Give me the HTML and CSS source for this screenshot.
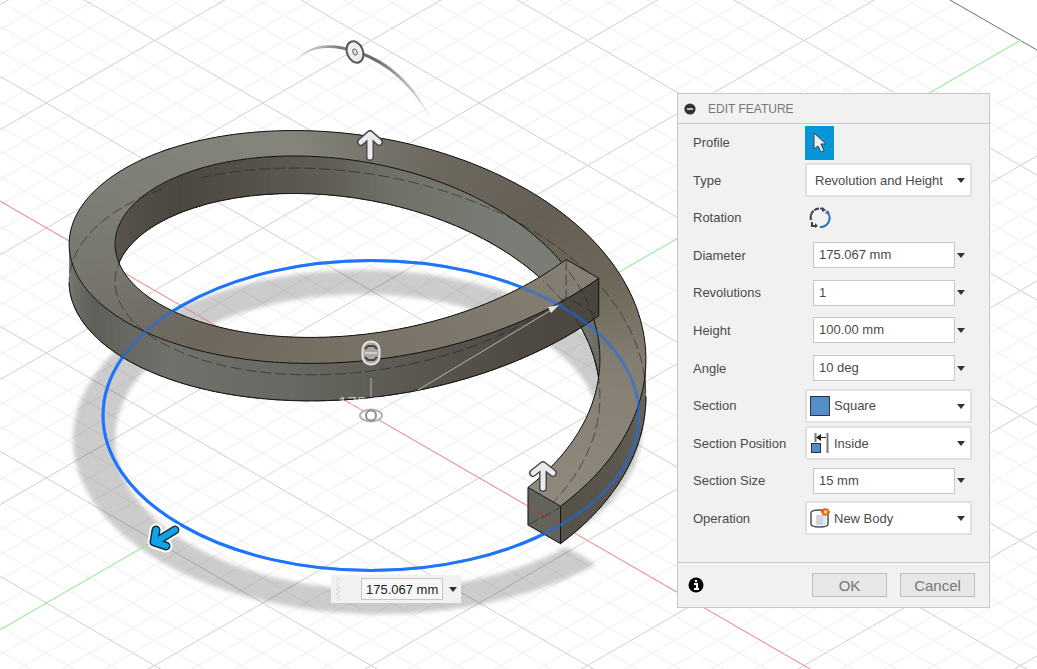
FILE: index.html
```html
<!DOCTYPE html>
<html lang="en">
  <head>
    <meta charset="UTF-8" />
    <meta name="viewport" content="width=device-width, initial-scale=1.0" />
    <title>Coil - Edit Feature</title>
    <link rel="stylesheet" href="styles.css">
  </head>
  <body>
    <main class="workspace">
      <svg class="viewport" viewBox="0 0 1037 669" preserveAspectRatio="xMinYMin slice" aria-label="Model view">
        <defs>
          <clipPath id="gridEdge">
            <path d="M0 0H951L1037 50V669H0Z" />
          </clipPath>
          <filter id="soft" x="-5%" y="-5%" width="110%" height="110%">
            <feGaussianBlur stdDeviation="2" />
          </filter>
          <linearGradient id="arcFade">
            <stop offset="0" stop-color="#777b80" stop-opacity="0" />
            <stop offset="0.35" stop-color="#777b80" />
            <stop offset="0.6" stop-color="#666a6e" />
            <stop offset="1" stop-color="#777b80" stop-opacity="0.1" />
          </linearGradient>
        </defs>

        <!-- ground grid, filled in by coil.js -->
        <g clip-path="url(#gridEdge)">
          <path id="gridMinor" class="grid-minor" />
          <path id="gridMajor" class="grid-major" />
        </g>
        <path class="grid-border" d="M950 0L1037 50" />

        <path id="shadow" class="shadow" filter="url(#soft)" />

        <path class="axis-y" d="M1021 40L619 272M147 545L0 630" />
        <path class="axis-y faint" d="M430 382L190 520" />
        <path class="axis-x" d="M0 201L810 669" />
        <ellipse class="profile" cx="371" cy="415.5" rx="268" ry="155" />

        <g id="coil"></g>

        <ellipse class="profile through" cx="371" cy="415.5" rx="268" ry="155" />
        <path class="axis-x through" d="M529 507L561 525" />

        <!-- diameter dimension -->
        <path class="leader" d="M418 390L553 309M371 378V397" />
        <path class="leader-tip" d="M559 305L548 307L551 313Z" />
        <text class="dimension" x="338" y="409">175.0</text>

        <!-- rotation handle -->
        <path fill="url(#arcFade)" d="M291 68C302 46 325 40 356 50C391 61 416 86 432 121C413 88 390 65 356 53C325 43 304 48 291 68Z" />
        <g transform="rotate(-22 355 52)">
          <ellipse cx="355" cy="52" rx="8" ry="11" fill="#eceded" stroke="#55585a" stroke-width="2" />
          <ellipse cx="355" cy="52" rx="2" ry="3" fill="none" stroke="#66696b" />
        </g>

        <!-- height arrows -->
        <g class="arrow">
          <path class="arrow-line" d="M370 157V137M361 142L370 134L379 142" />
          <path class="arrow-fill" d="M370 157V137M361 142L370 134L379 142" />
        </g>
        <g class="arrow">
          <path class="arrow-line" d="M543 488V468M533 473L543 465L553 473" />
          <path class="arrow-fill" d="M543 488V468M533 473L543 465L553 473" />
        </g>

        <!-- diameter arrow -->
        <g class="arrow-active">
          <path class="halo" d="M175 530L157 541M156 530L154 542L166 546" />
          <path class="edge" d="M175 530L157 541M156 530L154 542L166 546" />
          <path d="M154 532L152 544L162 544Z" fill="#0fa3ea" />
          <path class="core" d="M175 530L157 541M156 530L154 542L166 546" />
        </g>

        <!-- revolutions slider -->
        <rect x="362.500" y="341.500" width="17" height="23" rx="8" fill="#a9a8a4" stroke="#e2e2e0" stroke-width="2" />
        <path d="M365 349L368 346H374L377 349M365 357L368 360H374L377 357" fill="none" stroke="#4a4843" stroke-width="2" />
        <path d="M365 353H377" stroke="#f2f2f2" />

        <!-- origin -->
        <ellipse cx="371" cy="415.500" rx="11" ry="6" fill="#fff" fill-opacity="0.7" stroke="#b4b4b4" stroke-width="2" />
        <circle cx="371" cy="415.500" r="5" fill="#fff" stroke="#8f8f8f" stroke-width="2" />
      </svg>

      <form class="value-box">
        <span class="grip"></span>
        <input type="text" aria-label="Diameter value" value="175.067 mm" />
        <button type="button" class="caret" aria-label="Diameter options"></button>
      </form>

      <form class="panel">
        <header class="panel-header">
          <svg width="12" height="12" viewBox="0 0 12 12">
            <circle cx="6" cy="6" r="5.600" fill="#333" />
            <path d="M3 6H9" stroke="#eee" stroke-width="1.500" />
          </svg>
          <h1>EDIT FEATURE</h1>
        </header>

        <div class="fields">
          <label for="profile">Profile</label>
          <button type="button" class="pick" id="profile" aria-label="Select profile">
            <svg width="14" height="22" viewBox="0 0 14 22">
              <path d="M1 1V17L5 14L8 20L11 19L8 12H13Z" fill="#e8edf0" stroke="#39454d" stroke-linejoin="round" />
            </svg>
          </button>

          <label for="type">Type</label>
          <div class="select">
            <select id="type">
              <option>Revolution and Height</option>
            </select>
          </div>

          <label for="rotation">Rotation</label>
          <button type="button" class="rotate" id="rotation" aria-label="Flip rotation">
            <svg width="22" height="22" viewBox="0 0 22 22" fill="none" stroke-width="2">
              <path d="M2 13A9 9 0 0 1 2 8" stroke="#3e4046" />
              <path d="M2 8A9 9 0 0 1 14 2" stroke="#3e4046" stroke-dasharray="5 1" />
              <path d="M13 0L17 3L13 5Z" fill="#3e4046" />
              <path d="M3 15V19H6" stroke="#3e4046" />
              <path d="M6 16L9 19L6 21Z" fill="#3e4046" />
              <path d="M19 6A9 9 0 0 1 11 20" stroke="#2471b8" />
              <path d="M16 7L18 3L21 6Z" fill="#2471b8" />
            </svg>
          </button>

          <label for="diameter">Diameter</label>
          <div class="value">
            <input type="text" id="diameter" value="175.067 mm" />
            <button type="button" class="caret" aria-label="Diameter menu"></button>
          </div>

          <label for="revolutions">Revolutions</label>
          <div class="value">
            <input type="text" id="revolutions" value="1" />
            <button type="button" class="caret" aria-label="Revolutions menu"></button>
          </div>

          <label for="height">Height</label>
          <div class="value">
            <input type="text" id="height" value="100.00 mm" />
            <button type="button" class="caret" aria-label="Height menu"></button>
          </div>

          <label for="angle">Angle</label>
          <div class="value">
            <input type="text" id="angle" value="10 deg" />
            <button type="button" class="caret" aria-label="Angle menu"></button>
          </div>

          <label for="section">Section</label>
          <div class="select with-icon">
            <svg width="20" height="20" viewBox="0 0 20 20">
              <rect x="0.500" y="0.500" width="19" height="19" fill="#558dc9" stroke="#2c3440" />
            </svg>
            <select id="section">
              <option>Square</option>
            </select>
          </div>

          <label for="position">Section Position</label>
          <div class="select with-icon">
            <svg width="20" height="20" viewBox="0 0 20 20">
              <rect x="1.500" y="10.500" width="9" height="9" fill="#558dc9" stroke="#2c3440" />
              <path d="M5.500 0V9" stroke="#777" stroke-width="2" />
              <path d="M17.500 0V20" stroke="#777" stroke-width="2" />
              <path d="M8 4.500H16" stroke="#222" />
              <path d="M6 4.500L11 1V8Z" fill="#222" />
            </svg>
            <select id="position">
              <option>Inside</option>
            </select>
          </div>

          <label for="size">Section Size</label>
          <div class="value">
            <input type="text" id="size" value="15 mm" />
            <button type="button" class="caret" aria-label="Section size menu"></button>
          </div>

          <label for="operation">Operation</label>
          <div class="select with-icon">
            <svg width="20" height="20" viewBox="0 0 20 20">
              <path d="M1 5C1 1 18 1 18 5V16C18 20 1 20 1 16Z" fill="#fff" stroke="#4d535c" stroke-width="1.500" />
              <path d="M6 7H13V17H6Z" fill="#d0d6dc" />
              <path d="M13 7H16V17H13Z" fill="#e6e9ec" />
              <path d="M15.500 0V8M11 4H20M12.500 1L18.500 7M18.500 1L12.500 7" stroke="#e3661c" stroke-width="2" />
              <circle cx="15.500" cy="4" r="1.800" fill="#ffd35c" />
            </svg>
            <select id="operation">
              <option>New Body</option>
            </select>
          </div>
        </div>

        <footer class="panel-footer">
          <svg width="16" height="16" viewBox="0 0 16 16">
            <circle cx="8" cy="8" r="7.500" fill="#000" />
            <path d="M6 7H9V12M6 12H11" fill="none" stroke="#fff" stroke-width="2" />
            <circle cx="8" cy="4" r="1.300" fill="#fff" />
          </svg>
          <button type="submit">OK</button>
          <button type="button">Cancel</button>
        </footer>
      </form>
    </main>

    <script src="coil.js"></script>
  </body>
</html>
```

FILE: styles.css
```css
* {
  box-sizing: border-box;
}
body {
  margin: 0;
  font-family: "Liberation Sans", Arial, sans-serif;
  font-size: 13px;
  color: #4a4a4a;
  background-color: #fff;
}
.workspace {
  position: relative;
  min-height: 100vh;
  overflow: hidden;
}
.viewport {
  position: absolute;
  inset: 0;
  width: 100%;
  height: 100%;
}

/* scene */
.viewport path {
  stroke-linejoin: round;
}
.grid-minor {
  stroke: #eee;
}
.grid-major {
  stroke: #cfcfcf;
}
.grid-border {
  stroke: #777;
}
.shadow {
  fill: #000;
  fill-opacity: 0.2;
}
.axis-x {
  stroke: #ff8888;
}
.axis-x.through {
  stroke: #b03a36;
}
.axis-y {
  stroke: #92fa92;
}
.axis-y.faint {
  stroke: #d9fbd9;
}
.profile {
  fill: none;
  stroke: #2a7dfa;
  stroke-width: 3;
}
.profile.through {
  stroke: #0f6cff;
  stroke-opacity: 0.5;
}
.edge-solid {
  fill: none;
  stroke: #111;
}
.edge-hidden {
  fill: none;
  stroke: #222;
  stroke-opacity: 0.6;
  stroke-dasharray: 11 4;
}
.leader {
  stroke: #b5b3af;
}
.leader-tip {
  fill: #e4e3e1;
}
.dimension {
  font-size: 17px;
  fill: #fff;
  fill-opacity: 0.6;
}
.arrow path,
.arrow-active .halo,
.arrow-active .edge,
.arrow-active .core {
  fill: none;
}
.arrow path,
.arrow-active path {
  stroke-linecap: round;
}
.arrow-line {
  stroke: #4b4b4d;
  stroke-width: 8;
}
.arrow-fill {
  stroke: #e9ebed;
  stroke-width: 5;
}
.halo {
  stroke: #fff;
  stroke-width: 13;
}
.edge {
  stroke: #12313f;
  stroke-width: 9;
}
.core {
  stroke: #0fa3ea;
  stroke-width: 6;
}

/* shared controls */
input,
select,
button {
  font: inherit;
  color: inherit;
}
.caret {
  width: 12px;
  height: 20px;
  padding: 0;
  border: none;
  background: none;
}
.caret::before,
.select::after {
  content: "";
  display: block;
  width: 0;
  margin: auto;
  border: 4px solid transparent;
  border-top: 5px solid #333;
  border-bottom: none;
}

/* floating value box */
.value-box {
  position: absolute;
  left: 331px;
  top: 575px;
  display: flex;
  align-items: center;
  width: 130px;
  height: 28px;
  background-color: #f1f1f1;
}
.value-box input {
  width: 82px;
  height: 22px;
  padding: 0 4px;
  border: 1px solid #c6c6c6;
  background-color: #f7f7f7;
  color: #222;
}
.value-box .caret {
  margin-left: 4px;
}
.grip {
  width: 4px;
  height: 24px;
  margin: 0 21px 0 5px;
  background: repeating-linear-gradient(135deg, #d8d8d8 0 1px, #f1f1f1 1px 3px);
}

/* edit feature panel */
.panel {
  position: absolute;
  top: 93px;
  right: 47px;
  width: 313px;
  border: 1px solid #c8c8c8;
  background-color: #f1f1f1;
}
.panel-header {
  display: flex;
  align-items: center;
  gap: 12px;
  height: 30px;
  padding: 0 6px;
  border-bottom: 1px solid #c8c8c8;
}
.panel-header h1 {
  margin: 0;
  font-size: 12px;
  font-weight: normal;
  color: #777;
}
.fields {
  display: grid;
  grid-template-columns: 112px 1fr;
  grid-auto-rows: 1fr;
  align-items: center;
  height: 438px;
  padding: 0 17px 25px 15px;
}
.pick {
  display: flex;
  align-items: center;
  justify-content: center;
  width: 29px;
  height: 34px;
  padding: 0;
  border: none;
  background-color: #0696d7;
}
.rotate {
  width: 30px;
  height: 30px;
  padding: 4px;
  border: none;
  background: none;
}
.rotate svg {
  display: block;
}
.value {
  display: flex;
  align-items: center;
  padding-left: 8px;
}
.value input {
  width: 142px;
  height: 26px;
  padding: 0 5px 1px;
  border: 1px solid #c8c8c8;
  background-color: #fff;
}
.select {
  position: relative;
  height: 34px;
}
.select select {
  width: 100%;
  height: 100%;
  padding: 0 24px 0 8px;
  border: 2px solid #e0e0e0;
  border-radius: 2px;
  background-color: #fff;
  appearance: none;
}
.select svg {
  position: absolute;
  left: 5px;
  top: 7px;
}
.with-icon select {
  padding-left: 27px;
}
.select::after {
  position: absolute;
  right: 7px;
  top: 15px;
  pointer-events: none;
}
.panel-footer {
  display: flex;
  align-items: center;
  gap: 13px;
  height: 45px;
  padding: 0 14px 0 10px;
  border-top: 1px solid #c8c8c8;
}
.panel-footer svg {
  margin-right: auto;
}
.panel-footer button {
  width: 75px;
  height: 24px;
  padding: 0;
  border: 1px solid #bcbcbc;
  background-color: #e7e7e7;
  font-size: 15px;
  color: #777;
}
```

FILE: coil.js
```js
// isometric view: px radius on the ground, ground squash and px height
const CX = 371;
const CY = 415.5;
const SQUASH = 0.5774;
const RADIUS = 268;
const TAPER = 54;
const RISE = 250;
const WIDTH = 46;
const HALF = 18.75;

const topStops = [
  [0, "8f897d"], [45, "857f73"], [70, "6e685b"], [95, "665f55"],
  [120, "6d685e"], [135, "77746b"], [152, "85857c"], [200, "7f7f78"],
  [225, "7a7a73"], [250, "76736c"], [280, "6d675d"], [310, "777264"], [360, "857f75"],
];
const innerStops = [
  [0, "5a574f"], [45, "66645b"], [80, "7a7d75"], [100, "7a7d75"],
  [130, "70726a"], [145, "615d55"], [165, "555048"], [185, "4c4740"], [225, "5a5851"], [360, "5a5851"],
];
const outerStops = [
  [0, "565248"], [20, "5b574e"], [45, "6f6a5f"], [220, "9a9686"],
  [234, "77766d"], [250, "5d5f59"], [275, "70716a"], [300, "686963"],
  [320, "5c5a52"], [340, "504b44"], [360, "4a463f"],
];

function shade(stops, t) {
  let i = 1;
  while (i < stops.length - 1 && stops[i][0] < t) i++;
  const [t0, c0] = stops[i - 1];
  const [t1, c1] = stops[i];
  const k = Math.max(0, Math.min(1, (t - t0) / (t1 - t0)));
  const rgb = [0, 2, 4].map((p) => {
    const a = parseInt(c0.substr(p, 2), 16);
    const b = parseInt(c1.substr(p, 2), 16);
    return Math.round(a + (b - a) * k);
  });
  return "rgb(" + rgb.join(",") + ")";
}

// inset: distance in from the outer wall, lift: distance from the section centre
function point(t, inset, lift, flat) {
  const a = ((45 - t) * Math.PI) / 180;
  const r = RADIUS + (TAPER * t) / 360 - inset;
  const z = flat ? -HALF : (RISE * t) / 360 + lift;
  return [CX + r * Math.cos(a), CY + SQUASH * r * Math.sin(a) - z];
}

const outerTop = (t) => point(t, 0, HALF);
const outerBottom = (t) => point(t, 0, -HALF);
const innerTop = (t) => point(t, WIDTH, HALF);
const innerBottom = (t) => point(t, WIDTH, -HALF);

const coil = document.getElementById("coil");

function toPath(points) {
  return "M" + points.map((p) => p[0].toFixed(2) + " " + p[1].toFixed(2)).join("L");
}

function add(d, attrs) {
  const el = document.createElementNS("http://www.w3.org/2000/svg", "path");
  el.setAttribute("d", d);
  for (const name in attrs) el.setAttribute(name, attrs[name]);
  coil.appendChild(el);
}

function area(q) {
  let sum = 0;
  q.forEach((p, i) => {
    const n = q[(i + 1) % q.length];
    sum += p[0] * n[1] - n[0] * p[1];
  });
  return sum;
}

function sample(edge, from, to) {
  const points = [];
  for (let t = from; t <= to; t++) points.push(edge(t));
  return points;
}

// each strip runs on under the next one so no seam shows between them
function face(upper, lower, stops, from, to, sign) {
  for (let t = from; t < to; t++) {
    const quad = [upper(t), upper(t + 1), lower(t + 1), lower(t)];
    if (sign && area(quad) * sign < 0) continue;
    const end = Math.min(t + 3, to);
    const strip = sample(upper, t, end).concat(sample(lower, t, end).reverse());
    add(toPath(strip) + "Z", { fill: shade(stops, t + 0.5) });
  }
}

function line(edge, from, to, cls) {
  add(toPath(sample(edge, from, to)), { class: cls });
}

// an edge is only solid where the wall above it faces the viewer
function wallEdge(upper, lower, from, to, sign) {
  for (let t = from; t < to; t++) {
    const quad = [upper(t), upper(t + 1), lower(t + 1), lower(t)];
    if (area(quad) * sign > 0) line(lower, t, t + 1, "edge-solid");
  }
}

function drawPart(from, to) {
  const first = Math.max(0, from - 2);
  face(innerTop, innerBottom, innerStops, first, to, -1);
  wallEdge(innerTop, innerBottom, first, to, -1);
  face(outerTop, innerTop, topStops, first, to, 0);
  face(outerTop, outerBottom, outerStops, first, to, 1);
  wallEdge(outerTop, outerBottom, first, to, 1);
  line(outerBottom, from, to, "edge-hidden");
  line(innerBottom, from, to, "edge-hidden");
  line(outerTop, first, to, "edge-solid");
  line(innerTop, first, to, "edge-solid");
}

function drawCoil() {
  drawPart(0, 180);
  const start = [outerTop(0), innerTop(0), innerBottom(0), outerBottom(0)];
  add(toPath(start) + "Z", { fill: "#62645c", class: "cap", stroke: "#111" });
  add(toPath([innerBottom(0), [561, 507]]), { class: "edge-hidden" });

  drawPart(180, 360);
  add(toPath([innerTop(360), outerTop(360), outerBottom(360)]), { class: "edge-solid" });
  add(toPath([innerTop(360), innerBottom(360), outerBottom(360)]), { class: "edge-hidden" });
  line(innerTop, 50, 78, "edge-hidden");
  line(innerBottom, 56, 88, "edge-hidden");
}

function drawShadow() {
  const outer = sample((t) => point(t, 4, 0, true), 0, 360);
  const inner = sample((t) => point(t, WIDTH, 0, true), 0, 360).reverse();
  document.getElementById("shadow").setAttribute("d", toPath(outer.concat(inner)) + "Z");
}

function drawGrid() {
  let minor = "";
  let major = "";
  for (let i = -60; i <= 60; i++) {
    const y = CY + i * 25;
    const rise = 1200 * SQUASH;
    const d = `M${CX - 1200} ${y - rise}L${CX + 1200} ${y + rise}M${CX - 1200} ${y + rise}L${CX + 1200} ${y - rise}`;
    if (i % 5 === 0) major += d;
    else minor += d;
  }
  document.getElementById("gridMinor").setAttribute("d", minor);
  document.getElementById("gridMajor").setAttribute("d", major);
}

drawGrid();
drawShadow();
drawCoil();
```
